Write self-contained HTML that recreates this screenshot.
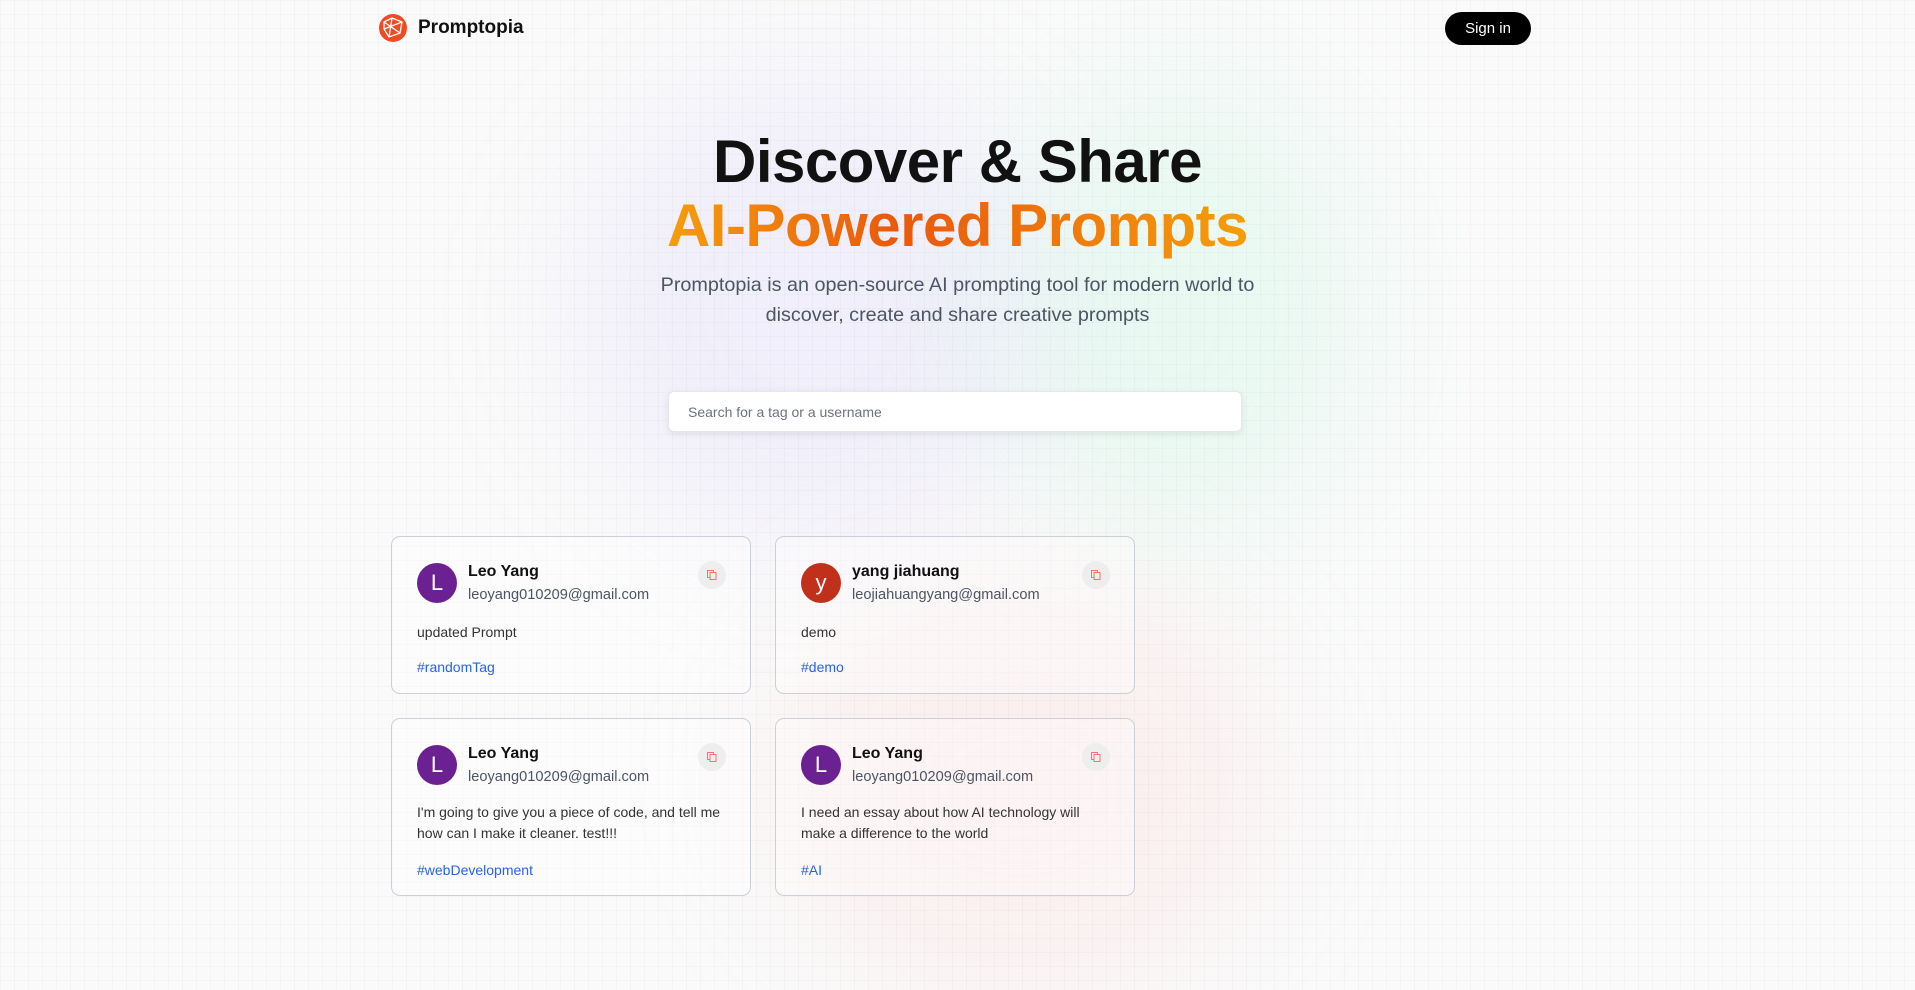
<!DOCTYPE html>
<html><head><meta charset="utf-8"><style>
*{box-sizing:border-box;margin:0;padding:0}
body{width:1915px;height:990px;overflow:hidden;font-family:"Liberation Sans",sans-serif;background:#fafafa;position:relative;color:#111}
.grid{position:absolute;inset:0;background-image:linear-gradient(rgba(0,0,0,.025) 1px,transparent 1px),linear-gradient(90deg,rgba(0,0,0,.025) 1px,transparent 1px);background-size:14px 14px}
.blob{position:absolute;border-radius:50%;filter:blur(70px)}
.nav{position:absolute;left:378px;top:13px;display:flex;align-items:center}
.nav span{font-weight:bold;font-size:19px;margin-left:10px}
.btn{position:absolute;left:1445px;top:12px;width:86px;height:33px;border-radius:17px;background:#000;color:#fff;font-size:15px;text-align:center;line-height:33px}
h1{position:absolute;left:0;width:1915px;text-align:center;font-size:60px;font-weight:800;line-height:64px;top:130px;letter-spacing:-0.5px}
.or{background:linear-gradient(90deg,#f59e0b,#ea580c 40%,#f59e0b);-webkit-background-clip:text;color:transparent}
.sub{position:absolute;top:270px;left:0;width:1915px;text-align:center;font-size:19.8px;line-height:30px;color:#4b5563}
.search{position:absolute;left:668px;top:391px;width:574px;height:41px;background:#fff;border:1px solid #e5e7eb;border-radius:6px;box-shadow:0 2px 8px rgba(0,0,0,.08);font-size:14px;color:#6b7280;padding:12px 19px}
.card{position:absolute;width:360px;border:1px solid #cbd0d8;border-radius:9px;background:rgba(255,255,255,.35);padding:0 25px}
.av{position:absolute;left:25px;top:26px;width:40px;height:40px;border-radius:50%;background:#6b2191;color:#fff;font-size:22px;text-align:center;line-height:40px}
.nm{position:absolute;left:76px;top:26px;font-weight:bold;font-size:16px}
.em{position:absolute;left:76px;top:50px;font-size:14.6px;color:#4b5563}
.cp{position:absolute;right:24px;top:24px;width:28px;height:28px;border-radius:50%;background:#eee;display:flex;align-items:center;justify-content:center}
.tx{position:absolute;left:25px;font-size:14px;line-height:21px;color:#333}
.tg{position:absolute;left:25px;font-size:14px;color:#2563eb}
</style></head><body>
<div class="blob" style="left:580px;top:80px;width:460px;height:460px;background:rgba(196,181,253,.17)"></div>
<div class="blob" style="left:1000px;top:80px;width:360px;height:460px;background:rgba(167,243,208,.2)"></div>
<div class="blob" style="left:780px;top:580px;width:480px;height:410px;background:rgba(254,202,202,.22)"></div>
<div class="grid"></div>
<div class="nav"><svg width="30" height="30" viewBox="0 0 30 30"><circle cx="15" cy="15" r="14" fill="#f04a23"/><g stroke="#fff" stroke-width="1.3" fill="none"><path d="M6 9 L14 5 L24 9 L22 20 L11 24 L6 16 Z"/><path d="M14 5 L11 24 M6 9 L22 20 M24 9 L6 16"/></g></svg><span>Promptopia</span></div>
<div class="btn">Sign in</div>
<h1>Discover &amp; Share<br><span class="or">AI-Powered Prompts</span></h1>
<div class="sub">Promptopia is an open-source AI prompting tool for modern world to<br>discover, create and share creative prompts</div>
<div class="search">Search for a tag or a username</div>

<div class="card" style="left:391px;top:536px;height:158px"><div class="av">L</div><div class="nm">Leo Yang</div><div class="em">leoyang010209@gmail.com</div><div class="cp"><svg width="12" height="12" viewBox="0 0 12 12" fill="none" stroke="#f87171"><rect x="1.5" y="1.5" width="6" height="7"/><rect x="4" y="3.5" width="6" height="7" fill="#eee"/></svg></div><div class="tx" style="top:85px">updated Prompt</div><div class="tg" style="top:122px">#randomTag</div></div>

<div class="card" style="left:775px;top:536px;height:158px"><div class="av" style="background:#c0301a">y</div><div class="nm">yang jiahuang</div><div class="em">leojiahuangyang@gmail.com</div><div class="cp"><svg width="12" height="12" viewBox="0 0 12 12" fill="none" stroke="#f87171"><rect x="1.5" y="1.5" width="6" height="7"/><rect x="4" y="3.5" width="6" height="7" fill="#eee"/></svg></div><div class="tx" style="top:85px">demo</div><div class="tg" style="top:122px">#demo</div></div>

<div class="card" style="left:391px;top:718px;height:178px"><div class="av">L</div><div class="nm">Leo Yang</div><div class="em">leoyang010209@gmail.com</div><div class="cp"><svg width="12" height="12" viewBox="0 0 12 12" fill="none" stroke="#f87171"><rect x="1.5" y="1.5" width="6" height="7"/><rect x="4" y="3.5" width="6" height="7" fill="#eee"/></svg></div><div class="tx" style="top:83px">I'm going to give you a piece of code, and tell me<br>how can I make it cleaner. test!!!</div><div class="tg" style="top:143px">#webDevelopment</div></div>

<div class="card" style="left:775px;top:718px;height:178px"><div class="av">L</div><div class="nm">Leo Yang</div><div class="em">leoyang010209@gmail.com</div><div class="cp"><svg width="12" height="12" viewBox="0 0 12 12" fill="none" stroke="#f87171"><rect x="1.5" y="1.5" width="6" height="7"/><rect x="4" y="3.5" width="6" height="7" fill="#eee"/></svg></div><div class="tx" style="top:83px">I need an essay about how AI technology will<br>make a difference to the world</div><div class="tg" style="top:143px">#AI</div></div>
</body></html>
